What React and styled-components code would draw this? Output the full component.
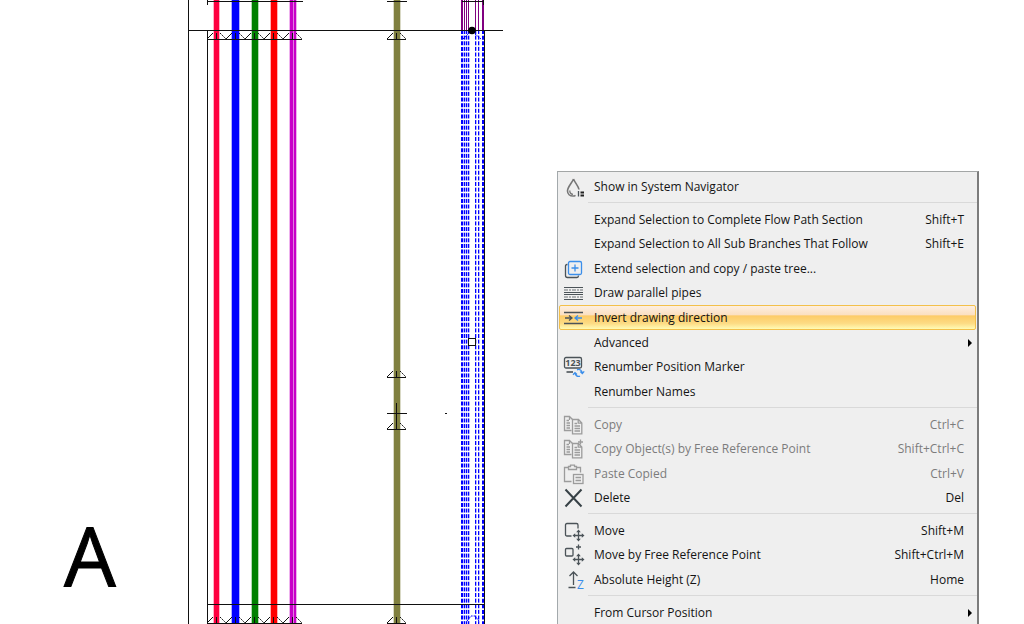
import React from "react";
import styled, { createGlobalStyle } from "styled-components";

const GlobalStyle = createGlobalStyle`
  * {
    box-sizing: border-box;
  }
  body {
    margin: 0;
    background: #fff;
    font-family: "Open Sans", "Noto Sans", sans-serif;
  }
`;

const Page = styled.main`
  display: flex;
  height: 100vh;
  overflow: hidden;
`;

const Canvas = styled.section`
  flex: 1;
  min-width: 0;
`;

const Plan = styled.svg`
  display: block;
  height: 100%;
  overflow: hidden;
`;

const Menu = styled.div`
  flex: 0 1 422px;
  margin: 171px 45px 0 0;
  padding: 2px 0 0;
  border: 1px solid #a3a6a6;
  border-left-color: #a3a9ac;
  border-right: 2px solid #7c7c7c;
  border-bottom: 0;
  background: #efefef;
`;

const Group = styled.div`
  & + & {
    padding-top: 8px;
    background: linear-gradient(#d9d9d9, #d9d9d9) 30px 3px / 100% 1px no-repeat;
  }
`;

const Item = styled.button`
  display: flex;
  align-items: center;
  width: calc(100% - 2px);
  height: 25px;
  margin: 0 1px;
  padding: 0 11px 0 1px;
  border: 1px solid transparent;
  border-radius: 2px;
  background: transparent;
  color: #141414;
  font-family: inherit;
  font-size: 12px;
  line-height: 16px;
  text-align: left;
  &:nth-child(5n + 2),
  &:nth-child(5n + 4) {
    height: 24px;
  }
  &:disabled {
    color: #7c7c7c;
  }
  &[data-active="true"] {
    border-color: #f3c04a;
    background: linear-gradient(
      #fdefe0 0%,
      #fbdfc0 40%,
      #fdcb67 42%,
      #fddb83 75%,
      #fffbb5 100%
    );
  }
`;

const IconSlot = styled.span`
  flex: none;
  width: 24px;
  height: 24px;
  margin-right: 9px;
  svg {
    display: block;
  }
`;

const Label = styled.span`
  flex: 1;
  white-space: nowrap;
`;

const Shortcut = styled.span`
  white-space: nowrap;
`;

const Arrow = styled.span`
  margin-right: -8px;
  border: 4px solid transparent;
  border-left: 4px solid #000;
  border-right: 0;
`;

const DARK = "#4b5358";
const BLUE = "#3b8eea";
const GREY = "#9c9c9c";

function Icon({ children, color = DARK }) {
  return (
    <svg
      width="24"
      height="24"
      viewBox="0 0 24 24"
      fill="none"
      stroke={color}
      strokeWidth="1.3"
      aria-hidden="true"
    >
      {children}
    </svg>
  );
}

function MoveCross({ x, y }) {
  return (
    <g transform={`translate(${x} ${y})`}>
      <path d="M0-4.5V4.5M-4.5 0H4.5" />
      <path
        d="M0-6L2.3-3.3H-2.3ZM0 6L2.3 3.3H-2.3ZM-6 0L-3.3-2.3V2.3ZM6 0L3.3-2.3V2.3Z"
        fill={DARK}
        stroke="none"
      />
    </g>
  );
}

function CopyPages() {
  return (
    <g>
      <path d="M10.5 17.5H3.5V3.5H8.5L11.5 6.5M8.5 3.5V7" />
      <path d="M5.5 7.5H8M5.5 10H9M5.5 12.5H9M5.5 15H9" />
      <path d="M11.5 6.5H17.5L20.8 10V20.8H11.5ZM17.2 6.5V10.2H20.8" />
      <path d="M13.5 10.5H16M13.5 13H19M13.5 15.5H19M13.5 18H19" />
    </g>
  );
}

const icons = {
  drop: (
    <Icon color="#777">
      <path
        d="M12.5 4C11 8 6.5 12 6.5 16C6.5 19 9 21 12 21C13 21 13.8 20.8 14.5 20.3M12.5 4C14 8 17.5 11 18 14.5"
        strokeWidth="1.6"
      />
      <path d="M8.8 15.5C8.6 17.8 10 19.2 12 19.3" />
      <path d="M17.5 16V21.5" stroke={DARK} />
      <path d="M19.5 17.5H23M19.5 20.5H23" stroke="#222" strokeWidth="2" />
    </Icon>
  ),
  extend: (
    <Icon>
      <path d="M6.5 7.5H6Q4.5 7.5 4.5 9V18.5Q4.5 20.5 6.5 20.5H16Q17.5 20.5 17.5 18.5" />
      <rect x="7.5" y="4.5" width="13" height="13" rx="1.5" stroke={BLUE} />
      <path d="M14 7.5V14.5M10.5 11H17.5" stroke={BLUE} />
    </Icon>
  ),
  parallel: (
    <Icon>
      <path d="M3 6.5H22M3 11.5H22M3 13.5H22M3 18.5H22" strokeWidth="1" />
      <path
        d="M3 9H22M3 16H22"
        strokeWidth="1"
        strokeDasharray="4 1 2 1"
        opacity=".8"
      />
    </Icon>
  ),
  invert: (
    <Icon>
      <path d="M3 6.5H22M3 17.5H22" />
      <path d="M4 12H11M8 9.5L11 12L8 14.5" />
      <path d="M21 12H14M17 9.5L14 12L17 14.5" stroke={BLUE} />
    </Icon>
  ),
  number: (
    <Icon>
      <rect x="3.5" y="2.5" width="17" height="10.5" rx="1.5" />
      <text
        x="12"
        y="11"
        textAnchor="middle"
        fontSize="9"
        fontWeight="700"
        fill={DARK}
        stroke="none"
        fontFamily="Open Sans, sans-serif"
      >
        123
      </text>
      <path d="M5.5 17H12" strokeWidth="1.6" />
      <path
        d="M16 14.8C18.5 13.8 21 15.2 21.3 18M19.3 16.5L21.3 18.5L23.2 16.3M19 21.2C16.5 22 14.3 20.5 14 18M12 19.8L14 17.6L16 19.5"
        stroke={BLUE}
      />
    </Icon>
  ),
  copy: (
    <Icon color={GREY}>
      <CopyPages />
    </Icon>
  ),
  copyRef: (
    <Icon color={GREY}>
      <CopyPages />
      <path d="M19.5 2.5V7.5M17 5H22" />
    </Icon>
  ),
  paste: (
    <Icon color={GREY}>
      <path d="M10.5 19.5H3.5V5.5H7M16 5.5H19.5V10.5M7.5 7.5V4.5H9.5V3.2H13.5V4.5H15.5V7.5Z" />
      <rect x="12.5" y="12.5" width="9.5" height="9" />
      <path d="M14.5 15.5H20M14.5 18.5H20" />
    </Icon>
  ),
  remove: (
    <Icon>
      <path d="M4.5 3.5L20.5 20.5M20.5 3.5L4.5 20.5" stroke="#374146" strokeWidth="2" />
    </Icon>
  ),
  move: (
    <Icon>
      <path d="M10.5 17H6Q4.5 17 4.5 15.5V6Q4.5 4.5 6 4.5H15.5Q17 4.5 17 6V9.5" />
      <MoveCross x={17.5} y={16.5} />
    </Icon>
  ),
  moveRef: (
    <Icon>
      <rect x="4.5" y="5.5" width="7.5" height="7.5" rx="1" />
      <path d="M17.5 1.5V6.5M15 4H20" />
      <MoveCross x={17.5} y={16.5} />
    </Icon>
  ),
  height: (
    <Icon>
      <path d="M12.5 17V4M8.5 8L12.5 4L16.5 8M7.5 19.5H14.5" />
      <text
        x="16"
        y="21"
        fontSize="12"
        fill={BLUE}
        stroke="none"
        fontFamily="Open Sans, sans-serif"
      >
        Z
      </text>
    </Icon>
  )
};

const groups = [
  [{ label: "Show in System Navigator", icon: "drop" }],
  [
    { label: "Expand Selection to Complete Flow Path Section", keys: "Shift+T" },
    { label: "Expand Selection to All Sub Branches That Follow", keys: "Shift+E" },
    { label: "Extend selection and copy / paste tree...", icon: "extend" },
    { label: "Draw parallel pipes", icon: "parallel" },
    { label: "Invert drawing direction", icon: "invert", active: true },
    { label: "Advanced", submenu: true },
    { label: "Renumber Position Marker", icon: "number" },
    { label: "Renumber Names" }
  ],
  [
    { label: "Copy", icon: "copy", keys: "Ctrl+C", disabled: true },
    {
      label: "Copy Object(s) by Free Reference Point",
      icon: "copyRef",
      keys: "Shift+Ctrl+C",
      disabled: true
    },
    { label: "Paste Copied", icon: "paste", keys: "Ctrl+V", disabled: true },
    { label: "Delete", icon: "remove", keys: "Del" }
  ],
  [
    { label: "Move", icon: "move", keys: "Shift+M" },
    { label: "Move by Free Reference Point", icon: "moveRef", keys: "Shift+Ctrl+M" },
    { label: "Absolute Height (Z)", icon: "height", keys: "Home" }
  ],
  [{ label: "From Cursor Position", submenu: true }]
];

const pipes = [
  { x: 214, width: 5, color: "#ff0040" },
  { x: 232, width: 7, color: "#0000ff" },
  { x: 252, width: 6, color: "#008000" },
  { x: 271, width: 6, color: "#ff0000" },
  { x: 290, width: 3, color: "#c800c8" },
  { x: 294, width: 2, color: "#c800c8" },
  { x: 394, width: 6, color: "#808040" }
];

const strands = [
  { x: 461, width: 2 },
  { x: 464, width: 1 },
  { x: 466, width: 1 },
  { x: 468, width: 1 },
  { x: 475, width: 1 },
  { x: 478, width: 1 },
  { x: 482, width: 2 }
];

const branches = [216, 235, 254, 273, 292];

// break symbol: left leg solid, right leg dashed, tick on the pipe
function Marker({ x, y }) {
  return (
    <g transform={`translate(${x} ${y})`}>
      <path d="M-9 0L-3-6" />
      <path d="M4-6L10 0" strokeDasharray="2 1" />
      <path d="M-9 .5H10" />
      <path d="M.5-6V0" />
    </g>
  );
}

function PipePlan() {
  return (
    <Plan width="557" role="img" aria-label="Pipe drawing">
      {pipes.map(p => (
        <g key={p.x} fill={p.color}>
          <rect x={p.x} y="0" width={p.width} height="624" />
          <rect x={p.x - 1} y="0" width="1" height="624" opacity=".3" />
          <rect x={p.x + p.width} y="0" width="1" height="624" opacity=".3" />
        </g>
      ))}
      {strands.map(s => (
        <g key={s.x}>
          <rect x={s.x} y="0" width={s.width} height="30" fill="#800080" />
          <g stroke="#0000ff" strokeDasharray="4 1.63">
            <path
              d={`M${s.x + s.width / 2} 30V624`}
              strokeWidth={s.width}
            />
            <path
              d={`M${s.x + s.width + 0.5} 30V624`}
              strokeWidth="1"
              opacity=".3"
            />
          </g>
        </g>
      ))}
      <g fill="none" stroke="#111" strokeWidth="1">
        <path d="M188.5 0V624M207.5 0V5M207.5 31V624M188 30.5H503M207 604.5H484" />
        <path d="M207 1.5H303M387 1.5H407M462 1.5H484M483.5 0V5M484.5 31V624" />
        {branches.map(x => (
          <g key={x}>
            <Marker x={x} y={39} />
            <Marker x={x} y={623} />
          </g>
        ))}
        <Marker x={396} y={39} />
        <Marker x={396} y={377} />
        <Marker x={396} y={429} />
        <Marker x={396} y={623} />
        <path d="M387 413.5H407M396.5 403V429M445 413.5H447" />
        <rect x="468.5" y="338.5" width="7" height="7" fill="#fff" />
        <path
          d="M463 39L468 34M475 34L481 39M467 621L471 616L475 616L479 621"
          stroke="#0000ff"
          strokeDasharray="2 1"
        />
      </g>
      <circle cx="472" cy="30.5" r="3.8" />
      <text
        x="64"
        y="587"
        fontSize="82"
        fontFamily="Open Sans, sans-serif"
        stroke="#000"
        strokeWidth="1"
      >
        A
      </text>
    </Plan>
  );
}

function MenuItem({ item }) {
  return (
    <Item
      type="button"
      role="menuitem"
      disabled={item.disabled}
      data-active={item.active}
      aria-haspopup={item.submenu ? "menu" : undefined}
    >
      <IconSlot>{icons[item.icon]}</IconSlot>
      <Label>{item.label}</Label>
      {item.keys && <Shortcut>{item.keys}</Shortcut>}
      {item.submenu && <Arrow />}
    </Item>
  );
}

function App() {
  return (
    <Page>
      <GlobalStyle />
      <Canvas>
        <PipePlan />
      </Canvas>
      <Menu role="menu">
        {groups.map(items => (
          <Group key={items[0].label} role="group">
            {items.map(item => (
              <MenuItem key={item.label} item={item} />
            ))}
          </Group>
        ))}
      </Menu>
    </Page>
  );
}

export default App;
